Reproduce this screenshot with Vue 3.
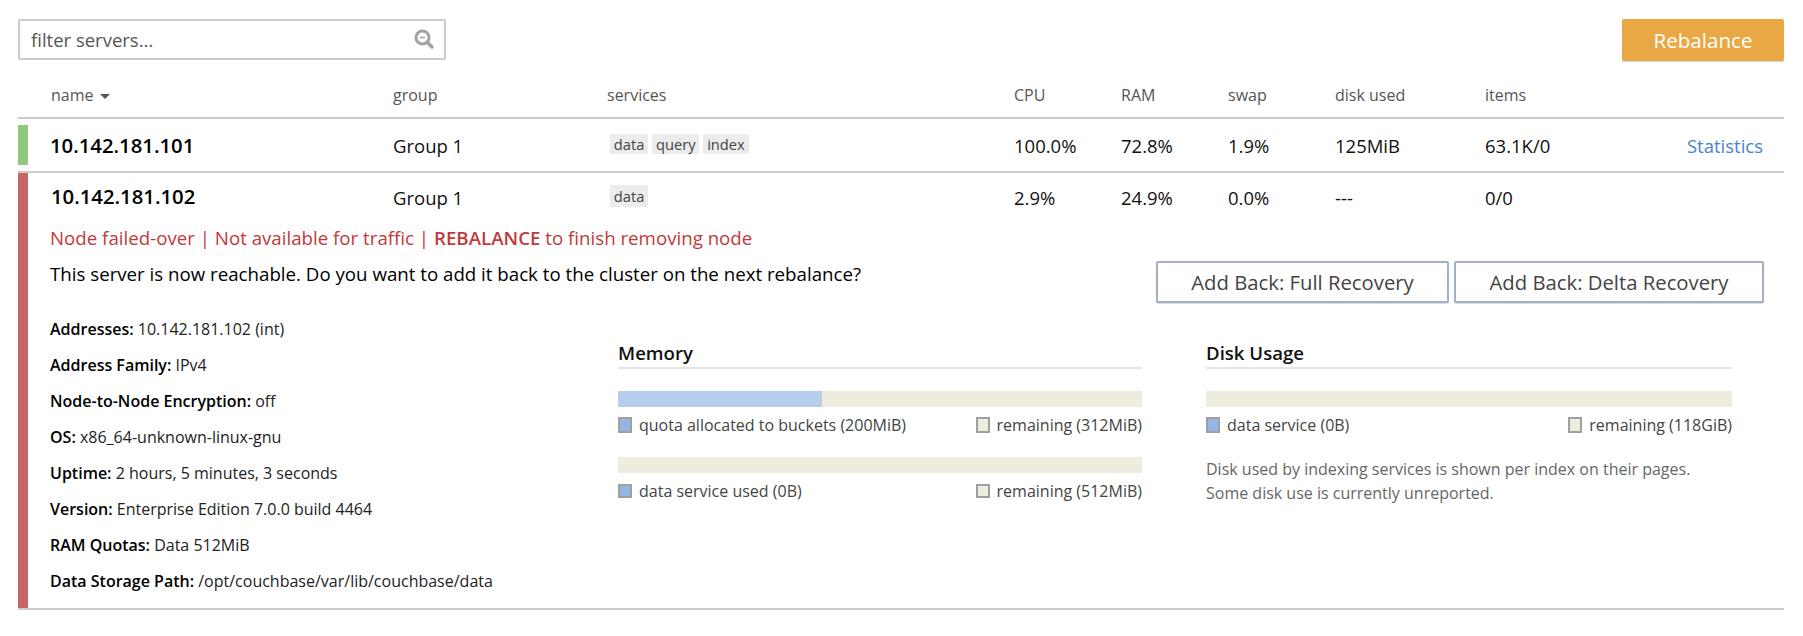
<script setup>
const cols = ['CPU', 'RAM', 'swap', 'disk used', 'items']
const row1 = ['100.0%', '72.8%', '1.9%', '125MiB', '63.1K/0']
const row2 = ['2.9%', '24.9%', '0.0%', '---', '0/0']
const info = [
  ['Address Family:', 'IPv4'],
  ['Node-to-Node Encryption:', 'off'],
  ['OS:', 'x86_64-unknown-linux-gnu'],
  ['Uptime:', '2 hours, 5 minutes, 3 seconds'],
  ['Version:', 'Enterprise Edition 7.0.0 build 4464'],
  ['RAM Quotas:', 'Data 512MiB'],
  ['Data Storage Path:', '/opt/couchbase/var/lib/couchbase/data']
]
</script>

<template>
  <div class="page">
    <div class="top">
      <div class="filter">
        <span>filter servers...</span>
        <svg width="20" height="20" viewBox="0 0 20 20" class="mag">
          <circle cx="8.5" cy="8.5" r="6.5" fill="none" stroke="#a3a3a3" stroke-width="3" />
          <path d="M6 8.5h5" stroke="#a3a3a3" stroke-width="1.6" />
          <path d="M13.2 13.2 18 18" stroke="#a3a3a3" stroke-width="3.4" stroke-linecap="round" />
        </svg>
      </div>
      <button class="rebalance">Rebalance</button>
    </div>

    <div class="grid head">
      <span class="name">name <i class="caret"></i></span>
      <span>group</span>
      <span>services</span>
      <span v-for="c in cols" :key="c">{{ c }}</span>
      <span></span>
    </div>

    <div class="node">
      <div class="bar green"></div>
      <div class="grid row first">
        <span class="ip">10.142.181.101</span>
        <span>Group 1</span>
        <span class="tags"><b>data</b><b>query</b><b>index</b></span>
        <span v-for="v in row1" :key="v">{{ v }}</span>
        <a class="stats">Statistics</a>
      </div>
    </div>

    <div class="node failed">
      <div class="bar red"></div>
      <div class="body">
        <div class="grid row second">
          <span class="ip ip2">10.142.181.102</span>
          <span>Group 1</span>
          <span class="tags"><b>data</b></span>
          <span v-for="v in row2" :key="v">{{ v }}</span>
          <span></span>
        </div>
        <div class="warn">Node failed-over | Not available for traffic | <strong>REBALANCE</strong> to finish removing node</div>
        <div class="reach">
          <span class="q">This server is now reachable. Do you want to add it back to the cluster on the next rebalance?</span>
          <div class="btns">
            <button class="outline full">Add Back: Full Recovery</button>
            <button class="outline delta">Add Back: Delta Recovery</button>
          </div>
        </div>
        <div class="detail">
          <div class="info">
            <p><b>Addresses:</b> 10.142.181.102 (int)</p>
            <p v-for="i in info" :key="i[0]"><b>{{ i[0] }}</b> {{ i[1] }}</p>
          </div>
          <div class="panel memory">
            <h4>Memory</h4>
            <div class="meter"><div class="used" style="width: 38.9%"></div></div>
            <div class="legend tall">
              <span><i class="sw blue"></i>quota allocated to buckets (200MiB)</span>
              <span><i class="sw rest"></i>remaining (312MiB)</span>
            </div>
            <div class="meter second-meter"></div>
            <div class="legend">
              <span><i class="sw blue"></i>data service used (0B)</span>
              <span><i class="sw rest"></i>remaining (512MiB)</span>
            </div>
          </div>
          <div class="panel disk">
            <h4>Disk Usage</h4>
            <div class="meter"></div>
            <div class="legend tall">
              <span><i class="sw blue"></i>data service (0B)</span>
              <span><i class="sw rest"></i>remaining (118GiB)</span>
            </div>
            <p class="note">Disk used by indexing services is shown per index on their pages.<br />Some disk use is currently unreported.</p>
          </div>
        </div>
      </div>
    </div>
  </div>
</template>

<style scoped>
.page {
  width: 1766px;
  margin-left: 18px;
  padding-top: 19px;
  font-family: "Open Sans", sans-serif;
  font-size: 16px;
  color: #000;
}
.top { display: flex; justify-content: space-between; align-items: flex-start; height: 42px; }
.filter {
  width: 428px;
  height: 41px;
  box-sizing: border-box;
  border: 2px solid #ccc;
  border-radius: 2px;
  padding: 0 10px 0 11px;
  display: flex;
  align-items: center;
  justify-content: space-between;
  font-size: 18.5px;
  color: #555;
}
.mag { flex: none; margin-top: -1px; }
.rebalance {
  width: 162px;
  height: 42px;
  border: 0;
  border-radius: 2px;
  background: #e9a843;
  box-shadow: 0 1px 1px #d0d0d0;
  color: #fff;
  font: 20.6px "Open Sans", sans-serif;
  padding: 0;
}
.grid {
  display: grid;
  grid-template-columns: 343px 214px 407px 107px 107px 107px 150px 150px 1fr;
  align-items: center;
}
.head {
  height: 58px;
  padding: 11px 20px 0 32px;
  border-bottom: 2px solid #ccc;
  font-size: 16px;
  color: #555;
  box-sizing: border-box;
  width: 100%;
}
.name { margin-left: 1px; }
.caret {
  display: inline-block;
  width: 0;
  height: 0;
  border: 5px solid transparent;
  border-top: 5px solid #555;
  border-bottom: 0;
  margin-left: 2px;
  vertical-align: 2px;
}
.node { display: flex; }
.node:not(.failed) { padding-top: 6px; height: 54px; box-sizing: border-box; border-bottom: 2px solid #ccc; }
.bar { width: 10px; flex: none; }
.green { background: #92c77f; height: 40px; }
.red { background: #cb6565; }
.failed { border-bottom: 2px solid #ccc; }
.body { flex: 1; min-width: 0; padding-left: 22px; padding-right: 20px; }
.row { height: 40px; font-size: 18.5px; color: #111; }
.first { flex: 1; padding-left: 22px; padding-right: 20px; }
.second { height: 48px; }
.ip { font-size: 20.3px; font-weight: 600; color: #000; }
.ip2 { margin-left: 1px; margin-top: -3px; }
.tags { display: flex; gap: 4px; margin-top: -3px; margin-left: 3px; }
.second .tags { margin-top: -2px; }
.tags b {
  font-weight: 400;
  font-size: 14.7px;
  line-height: 20px;
  padding: 0 3.8px;
  background: #ececec;
  color: #444;
  border-radius: 1px;
}
.second .tags b { line-height: 22px; }
.stats { color: #4a82d6; justify-self: end; font-size: 18.5px; margin-right: 1px; }
.warn { font-size: 18.7px; color: #c23a3a; line-height: 22px; margin-top: 6px; }
.warn strong { font-weight: 600; }
.reach { display: flex; justify-content: space-between; align-items: flex-start; margin-top: 9px; }
.q { font-size: 18.7px; line-height: 22px; margin-top: 5px; }
.btns { display: flex; gap: 5px; margin-top: 3px; }
.outline {
  height: 42px;
  box-sizing: border-box;
  background: #fff;
  border: 2px solid #a3b0c4;
  border-radius: 2px;
  box-shadow: 0 1px 1px #d8dde5;
  font: 20.3px "Open Sans", sans-serif;
  color: #444;
  padding: 0;
}
.full { width: 293px; }
.delta { width: 310px; }
.detail { display: flex; margin-top: 7px; }
.info { width: 568px; flex: none; padding: 1px 0 9px; }
.info p { margin: 0; height: 36px; line-height: 36px; font-size: 16px; color: #222; }
.info b { font-weight: 600; color: #000; }
.panel { flex: none; }
.memory { width: 524px; margin-right: 64px; }
.disk { width: 526px; }
.panel h4 {
  margin: 31px 0 22px;
  height: 26px;
  line-height: 24px;
  font-size: 18.6px;
  font-weight: 600;
  color: #111;
  border-bottom: 2px solid #e5e5e5;
}
.meter { height: 16px; background: #eeebdf; }
.used { height: 100%; background: #b7cdeb; }
.second-meter { margin-top: 22px; }
.legend {
  display: flex;
  justify-content: space-between;
  font-size: 16px;
  line-height: 20px;
  margin-top: 8px;
  color: #444;
  white-space: nowrap;
}
.legend span { display: flex; align-items: center; }
.sw {
  width: 14px;
  height: 14px;
  box-sizing: border-box;
  border: 2px solid #a0a0a0;
  margin-right: 7px;
}
.tall .sw { height: 16px; }
.blue { background: #93b6e4; }
.rest { background: #eeebdf; }
.note { margin: 22px 0 0; font-size: 16px; line-height: 24px; color: #666; }
</style>

<style>
html, body { background: #fff; }
</style>
